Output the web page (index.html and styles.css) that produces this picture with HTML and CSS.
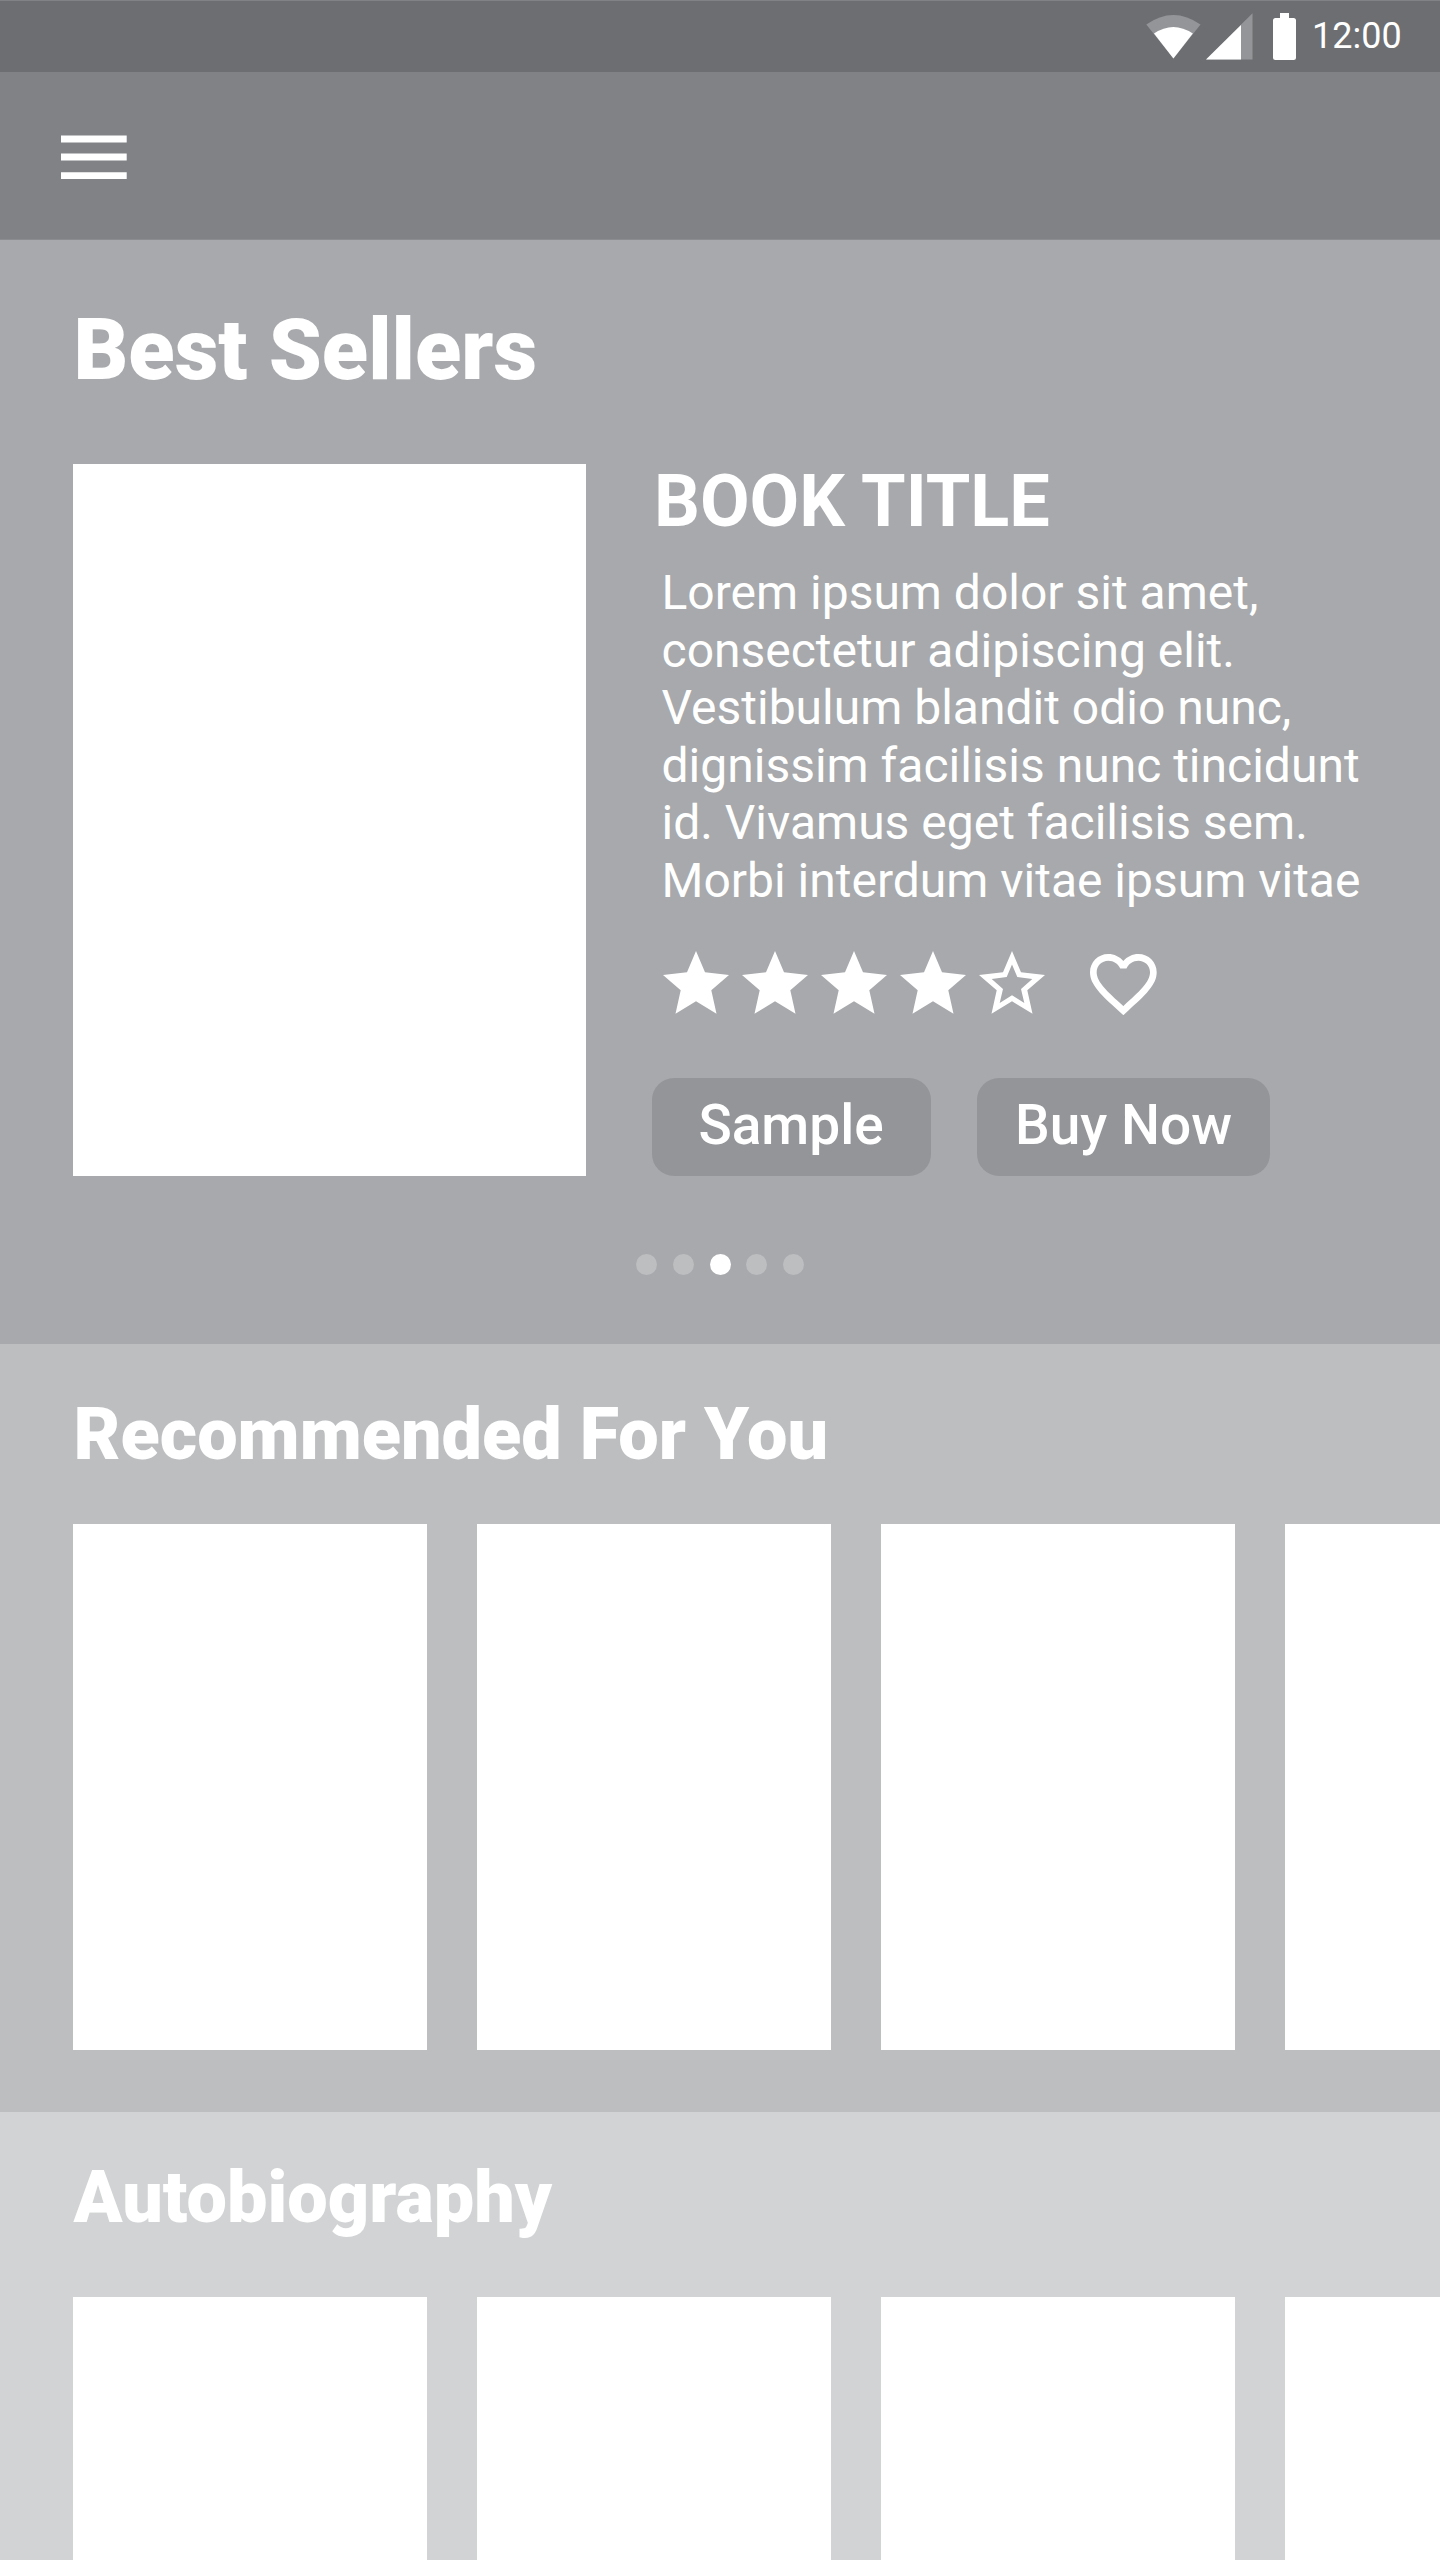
FILE: index.html
```html
<!DOCTYPE html>
<html lang="en">
<head>
<meta charset="utf-8">
<title>Book Store</title>
<link rel="stylesheet" href="styles.css">
</head>
<body>
<svg class="defs" width="0" height="0">
  <symbol id="star" viewBox="0 0 66 63"><path d="M33 0L42 21.300L66 24L48.300 39.300L53.500 62.700L33 50.300L12.500 62.700L17.700 39.300L0 24L24 21.300Z"/></symbol>
  <symbol id="star-outline" viewBox="0 0 66 63"><path fill-rule="evenodd" d="M33 0L42 21.300L66 24L48.300 39.300L53.500 62.700L33 50.300L12.500 62.700L17.700 39.300L0 24L24 21.300ZM33 13.400L27.700 26L12.700 28L24 38L20.700 52L33 44.300L45.300 52L42 38L53.300 28L38.300 26Z"/></symbol>
</svg>
<div class="status">
  <svg class="signals" width="180" height="72" viewBox="0 0 180 72">
    <path fill="#939598" d="M26.300 24.500Q53.300 5.500 80.500 24.500L53.500 58.500Z"/>
    <path fill="#fff" d="M34 33.500Q53.300 20.500 72.800 33.500L53.400 58.500Z"/>
    <path fill="#939598" d="M132.500 13.300V59.500H86Z"/>
    <path fill="#fff" d="M121 25V59.500H86Z"/>
    <path fill="#fff" d="M160 13h9v5h4.500a2.500 2.500 0 0 1 2.500 2.500v37a2.500 2.500 0 0 1-2.500 2.500h-18a2.500 2.500 0 0 1-2.500-2.500v-37a2.500 2.500 0 0 1 2.500-2.500h4.500z"/>
  </svg>
  <span class="clock">12:00</span>
</div>
<header class="appbar">
  <svg width="66" height="45" viewBox="0 0 66 45"><path fill="#fff" d="M0 .5h65.700v6.900H0zM0 18.600h65.700v6.900H0zM0 37.200h65.700V44H0z"/></svg>
</header>
<main>
  <section class="best">
    <h1>Best Sellers</h1>
    <div class="feature">
      <div class="cover"></div>
      <div class="info">
        <h2 class="book-title">BOOK TITLE</h2>
        <p class="summary">Lorem ipsum dolor sit amet,<br>consectetur adipiscing elit.<br>Vestibulum blandit odio nunc,<br>dignissim facilisis nunc tincidunt<br>id. Vivamus eget facilisis sem.<br>Morbi interdum vitae ipsum vitae</p>
        <div class="rating">
          <svg class="star"><use href="#star"/></svg>
          <svg class="star"><use href="#star"/></svg>
          <svg class="star"><use href="#star"/></svg>
          <svg class="star"><use href="#star"/></svg>
          <svg class="star"><use href="#star-outline"/></svg>
          <svg class="heart" viewBox="2 3 20 18.350"><path d="M16.500 3c-1.740 0-3.410.81-4.500 2.090C10.910 3.810 9.240 3 7.500 3 4.420 3 2 5.420 2 8.500c0 3.780 3.400 6.860 8.550 11.540L12 21.350l1.450-1.320C18.600 15.360 22 12.280 22 8.500 22 5.420 19.580 3 16.500 3zm-4.400 15.550l-.1.1-.1-.1C7.140 14.240 4 11.390 4 8.500 4 6.500 5.500 5 7.500 5c1.540 0 3.040.99 3.570 2.360h1.870C13.460 5.990 14.960 5 16.500 5c2 0 3.500 1.500 3.500 3.500 0 2.890-3.140 5.740-7.900 10.050z"/></svg>
        </div>
        <div class="actions">
          <button class="btn btn-sample">Sample</button>
          <button class="btn btn-buy">Buy Now</button>
        </div>
      </div>
    </div>
    <div class="dots"><i></i><i></i><i class="active"></i><i></i><i></i></div>
  </section>
  <section class="shelf recommended">
    <h2>Recommended For You</h2>
    <div class="books"><div></div><div></div><div></div><div></div></div>
  </section>
  <section class="shelf autobiography">
    <h2>Autobiography</h2>
    <div class="books"><div></div><div></div><div></div><div></div></div>
  </section>
</main>
</body>
</html>
```
FILE: styles.css
```css
* { box-sizing: border-box; }
html, body { height: 2560px; overflow: hidden; }
body { margin: 0; color: #fff; font-family: Roboto, sans-serif; }
h1, h2, p { margin: 0; white-space: nowrap; }
svg { display: block; flex: none; }
.defs { position: absolute; }

.status { height: 72px; background: #6d6e71; border-top: 1px solid #808285; display: flex; }
.signals { margin: -1px 0 0 1120px; }
.clock { font-size: 36px; line-height: 70px; margin-left: 12px; }

.appbar { height: 168px; background: #808285; border-bottom: 1px solid #8a8c8f; padding: 63px 0 0 61px; }

.best { height: 1104px; background: #a7a9ac; padding: 60px 0 0 73px; }
h1 { font-size: 85px; line-height: 100px; font-weight: 900; padding-left: 0.500px; }
.feature { display: flex; margin-top: 64px; }
.cover { width: 512.500px; height: 712px; background: #fff; }
.info { margin-left: 66.500px; width: 720px; height: 712px; display: flex; flex-direction: column; }
.book-title { font-size: 72px; line-height: 75px; font-weight: 700; padding-left: 2px; }
.summary { font-size: 48px; line-height: 57.600px; margin: 25px 0 0 9.500px; }
.rating { display: flex; gap: 13.170px; margin: 41.700px 0 0 10.500px; fill: #fff; }
.star { width: 66px; height: 63px; }
.heart { width: 66.700px; height: 61.200px; margin: 2.700px 0 0 32.200px; }
.actions { display: flex; gap: 46px; margin-top: auto; }
.btn { height: 98px; border: 0; border-radius: 22px; background: #939598; color: #fff; font: 500 55px/60px Roboto, sans-serif; padding: 0 0 5px; }
.btn-sample { width: 279px; padding-right: 1px; }
.btn-buy { width: 293px; }
.dots { display: flex; justify-content: center; gap: 15.600px; margin: 78px 0 0 -73px; }
.dots i { width: 21px; height: 21px; border-radius: 50%; background: #bcbec0; }
.dots .active { background: #fff; }

.shelf { padding-left: 73px; overflow: hidden; }
.shelf h2 { font-size: 72px; line-height: 84px; font-weight: 900; padding-left: 0.500px; }
.books { display: flex; gap: 50px; }
.books div { flex: none; width: 354px; height: 526px; background: #fff; }
.recommended { height: 768px; background: #bcbec0; padding-top: 49px; }
.recommended .books { margin-top: 47px; }
.autobiography { height: 448px; background: #d1d3d4; padding-top: 44px; }
.autobiography .books { margin-top: 57px; }
```
